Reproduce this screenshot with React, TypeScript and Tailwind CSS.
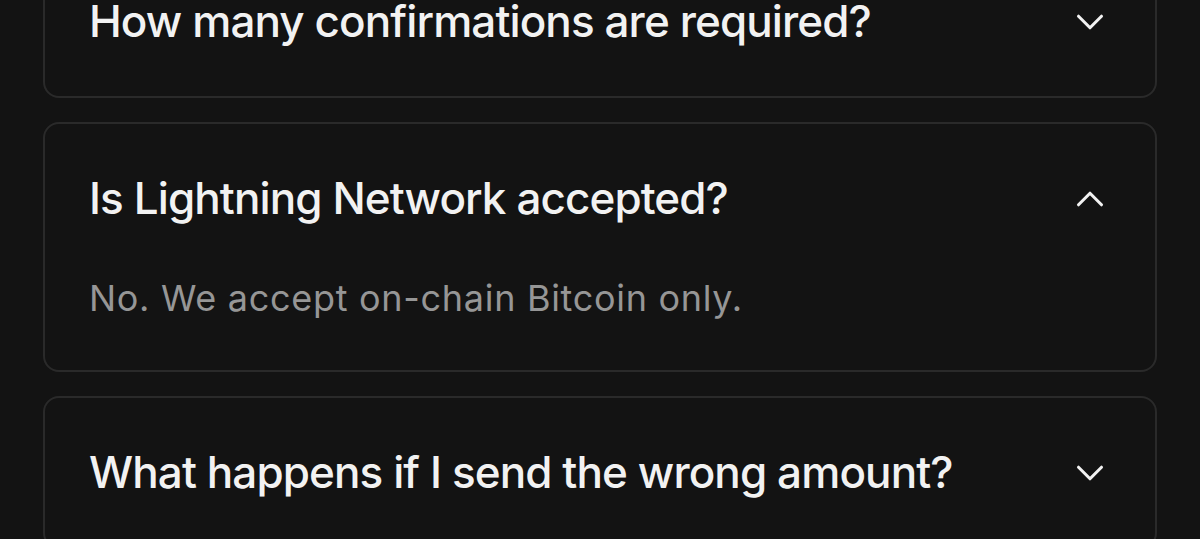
import { useState } from 'react';

const FAQS = [
  {
    q: 'How many confirmations are required?',
    a: 'We require 1 confirmation before your order is processed.',
  },
  {
    q: 'Is Lightning Network accepted?',
    a: 'No. We accept on-chain Bitcoin only.',
  },
  {
    q: 'What happens if I send the wrong amount?',
    a: 'Contact support with your transaction ID and we will sort it out.',
  },
];

function Chevron({ open }: { open: boolean }) {
  return (
    <svg
      width={46}
      height={46}
      viewBox="0 0 24 24"
      fill="none"
      stroke="currentColor"
      strokeWidth={1.6}
      strokeLinecap="round"
      strokeLinejoin="round"
      className="shrink-0 text-[#f2f2f2]"
    >
      {open ? <path d="m6 15 6-6 6 6" /> : <path d="m6 9 6 6 6-6" />}
    </svg>
  );
}

export default function App() {
  const [openIndex, setOpenIndex] = useState<number | null>(1);

  return (
    <div className="min-h-screen bg-[#131313] px-[43px] font-['Inter',sans-serif] overflow-hidden">
      <div className="mt-[-55px] flex flex-col gap-6">
        {FAQS.map((item, i) => {
          const open = openIndex === i;
          return (
            <div key={item.q} className="rounded-[16px] border-2 border-[#2a2a2a] bg-[#131313]">
              <button
                type="button"
                onClick={() => setOpenIndex(open ? null : i)}
                className="flex w-full items-center justify-between gap-4 py-[47px] pl-[44px] pr-[42px] text-left"
              >
                <span className="text-[44px] font-medium leading-[55px] tracking-[-0.9px] text-[#f2f2f2]">
                  {item.q}
                </span>
                <Chevron open={open} />
              </button>
              {open && (
                <p className="pb-[47px] pl-[44px] pr-[42px] text-[36px] leading-[50px] tracking-[0.7px] text-[#969696]">
                  {item.a}
                </p>
              )}
            </div>
          );
        })}
      </div>
    </div>
  );
}
